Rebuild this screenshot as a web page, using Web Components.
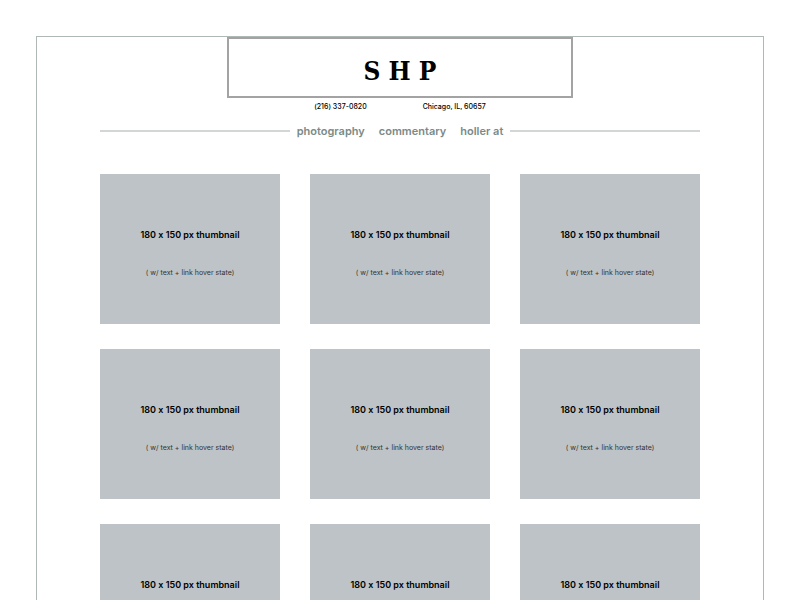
<!DOCTYPE html>
<html lang="en">
<head>
<meta charset="utf-8">
<title>SHP</title>
<style>
html { scrollbar-width: none; }
body { margin: 0; background: #fff; color: #000; font-family: Inter, "Liberation Sans", sans-serif; font-variant-ligatures: no-contextual; }
</style>
</head>
<body>
<shp-page>
  <shp-masthead slot="header">
    S H P
    <span slot="phone">(216) 337-0820</span>
    <span slot="place">Chicago, IL, 60657</span>
  </shp-masthead>
  <shp-nav slot="header">
    <shp-link to="#photography">photography</shp-link>
    <shp-link to="#commentary">commentary</shp-link>
    <shp-link to="#holler">holler at</shp-link>
  </shp-nav>
  <shp-thumb></shp-thumb><shp-thumb></shp-thumb><shp-thumb></shp-thumb>
  <shp-thumb></shp-thumb><shp-thumb></shp-thumb><shp-thumb></shp-thumb>
  <shp-thumb></shp-thumb><shp-thumb></shp-thumb><shp-thumb></shp-thumb>
</shp-page>
<script>
const define = (name, html) => {
  const template = document.createElement('template');
  template.innerHTML = html;
  customElements.define(name, class extends HTMLElement {
    constructor() {
      super();
      this.attachShadow({ mode: 'open' }).append(template.content.cloneNode(true));
    }
    connectedCallback() {
      const link = this.shadowRoot.querySelector('a');
      if (link && this.hasAttribute('to')) link.href = this.getAttribute('to');
    }
  });
};

define('shp-page', `
  <style>
    :host { display: block; padding: 36px; }
    .frame { border: 1px solid #afb8b6; padding: 0 63px 36px; }
    main { display: grid; grid-template-columns: repeat(3, 1fr); gap: 25px 30px; margin-top: 35px; }
  </style>
  <div class="frame">
    <header><slot name="header"></slot></header>
    <main><slot></slot></main>
  </div>`);

define('shp-masthead', `
  <style>
    :host { display: block; }
    h1 { box-sizing: border-box; max-width: 346px; margin: 0 auto; padding: 16px 0 9px; border: 2px solid #a3a3a3;
      font: bold 26px/32px "DejaVu Serif Condensed", "DejaVu Serif", serif; text-align: center; }
    .contact { display: flex; justify-content: center; gap: 56px; padding-top: 3px; font-size: 7px; font-weight: 500; line-height: 12px; }
  </style>
  <h1><slot></slot></h1>
  <div class="contact"><slot name="phone"></slot><slot name="place"></slot></div>`);

define('shp-nav', `
  <style>
    :host { display: block; }
    nav { display: flex; align-items: center; justify-content: center; gap: 14px; padding-top: 10px; line-height: 16px; }
    nav::before, nav::after { content: ""; flex: 1; height: 2px; background: #d2d6d6; }
    nav::before { margin-right: -7px; }
    nav::after { margin-left: -7px; }
  </style>
  <nav><slot></slot></nav>`);

define('shp-link', `
  <style>
    :host { display: block; }
    a { display: block; color: #7b8a86; font-size: 11px; font-weight: 600; line-height: 16px; text-decoration: none; }
    a:hover { color: #000; }
  </style>
  <a><slot></slot></a>`);

define('shp-thumb', `
  <style>
    :host { display: flex; flex-direction: column; align-items: center; justify-content: center; gap: 24px;
      box-sizing: border-box; min-height: 150px; padding-top: 9px; background: #bdc3c7; }
    p { margin: 0; line-height: 14px; text-align: center; }
    .size { font-size: 9px; font-weight: 600; }
    .note { color: #333; font-size: 7px; }
  </style>
  <p class="size">180 x 150 px thumbnail</p>
  <p class="note">( w/ text + link hover state)</p>`);
</script>
</body>
</html>
